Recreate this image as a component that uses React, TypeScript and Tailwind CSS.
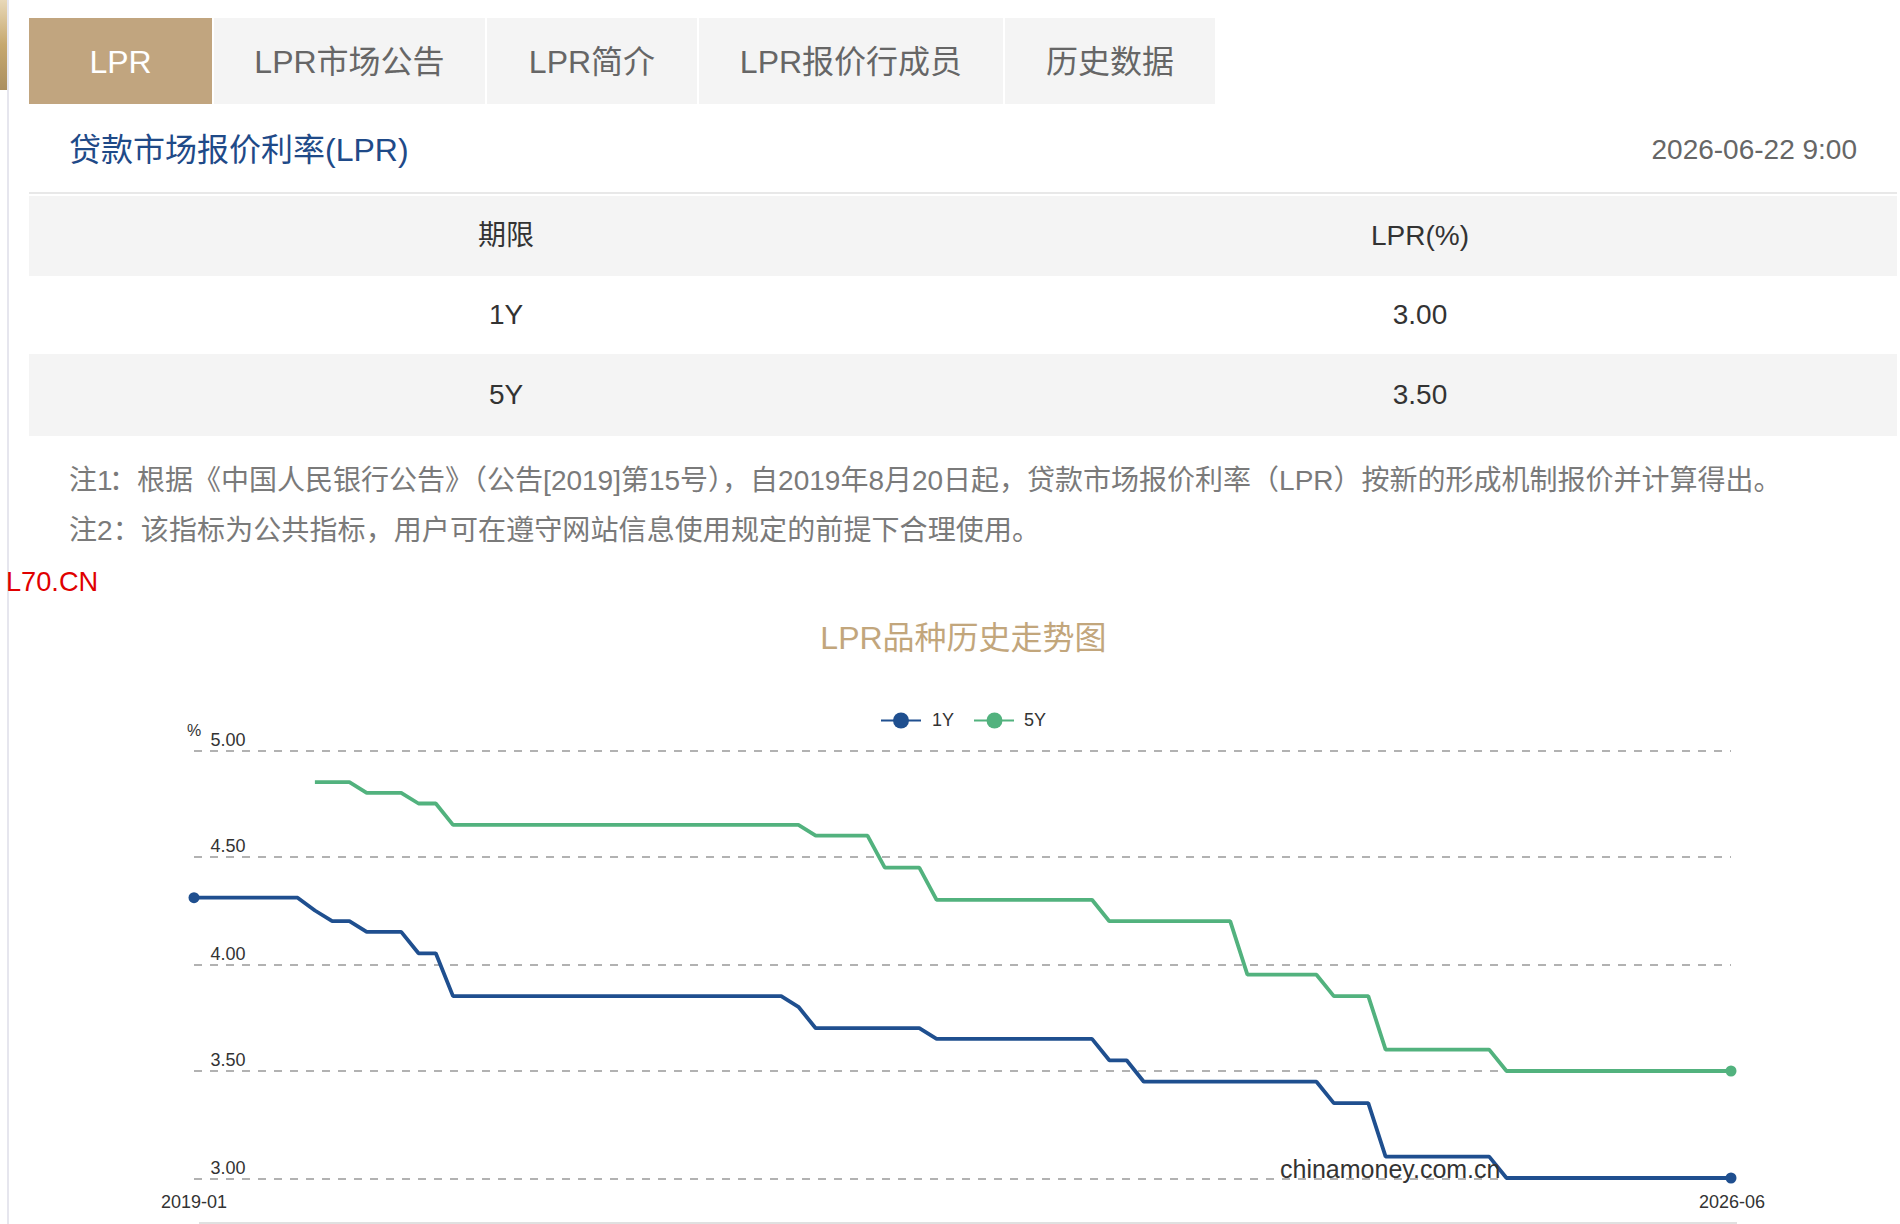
const tabs = [
  { label: 'LPR', width: 'w-[183px]', active: true },
  { label: 'LPR市场公告', width: 'w-[271px]', active: false },
  { label: 'LPR简介', width: 'w-[210px]', active: false },
  { label: 'LPR报价行成员', width: 'w-[304px]', active: false },
  { label: '历史数据', width: 'w-[210px]', active: false },
];

const rows = [
  { term: '期限', rate: 'LPR(%)', height: 'h-[80px]', shaded: true },
  { term: '1Y', rate: '3.00', height: 'h-[78px]', shaded: false },
  { term: '5Y', rate: '3.50', height: 'h-[82px]', shaded: true },
];

// [months held, rate], from 2019-01
const oneYear: [number, number][] = [
  [7, 4.31], [1, 4.25], [2, 4.2], [3, 4.15], [2, 4.05], [20, 3.85], [1, 3.8], [7, 3.7],
  [10, 3.65], [2, 3.55], [11, 3.45], [3, 3.35], [7, 3.1], [14, 3.0],
];
// 5Y series starts at 2019-08
const fiveYear: [number, number][] = [
  [3, 4.85], [3, 4.8], [2, 4.75], [21, 4.65], [4, 4.6], [3, 4.45], [10, 4.3], [8, 4.2],
  [5, 3.95], [3, 3.85], [7, 3.6], [14, 3.5],
];

const X0 = 194;
const STEP = (1731 - 194) / 89;
const toX = (i: number) => X0 + i * STEP;
const toY = (v: number) => 1178 - (v - 3) * 214;

function buildPoints(series: [number, number][], start: number) {
  const pts: string[] = [];
  let i = start;
  series.forEach(([months, rate]) => {
    for (let m = 0; m < months; m++) {
      pts.push(`${toX(i).toFixed(1)},${toY(rate).toFixed(1)}`);
      i++;
    }
  });
  return pts.join(' ');
}

function Chart() {
  const grid = [
    { y: 751, label: '5.00' },
    { y: 857, label: '4.50' },
    { y: 965, label: '4.00' },
    { y: 1071, label: '3.50' },
    { y: 1179, label: '3.00' },
  ];

  return (
    <svg viewBox="9 660 1891 564" className="block h-[564px] w-[1891px]">
      {grid.map((g) => (
        <g key={g.y}>
          <line x1={194} x2={1731} y1={g.y} y2={g.y} stroke="#999" strokeWidth={1.5} strokeDasharray="8 8" />
          <text x={210.5} y={g.y - 5} className="fill-[#333] text-[18px]">{g.label}</text>
        </g>
      ))}
      <text x={187} y={736} className="fill-[#333] text-[16px]">%</text>

      <line x1={881} x2={921} y1={720.5} y2={720.5} stroke="#1f4f8f" strokeWidth={2} />
      <circle cx={901} cy={720.5} r={8} fill="#1f4f8f" />
      <text x={932} y={726} className="fill-[#333] text-[18px]">1Y</text>
      <line x1={974} x2={1014} y1={720.5} y2={720.5} stroke="#52b27e" strokeWidth={2} />
      <circle cx={994.5} cy={720.5} r={8} fill="#52b27e" />
      <text x={1024} y={726} className="fill-[#333] text-[18px]">5Y</text>

      <polyline points={buildPoints(fiveYear, 7)} fill="none" stroke="#52b27e" strokeWidth={3.8} strokeLinejoin="bevel" />
      <polyline points={buildPoints(oneYear, 0)} fill="none" stroke="#1f4f8f" strokeWidth={3.8} strokeLinejoin="bevel" />
      <circle cx={194} cy={toY(4.31)} r={5.5} fill="#1f4f8f" />
      <circle cx={1731} cy={toY(3.0)} r={5.5} fill="#1f4f8f" />
      <circle cx={1731} cy={toY(3.5)} r={5.5} fill="#52b27e" />

      <text x={1280} y={1178} className="fill-[#333] text-[25px]">chinamoney.com.cn</text>
      <text x={194} y={1208} textAnchor="middle" className="fill-[#333] text-[18px]">2019-01</text>
      <text x={1732} y={1208} textAnchor="middle" className="fill-[#333] text-[18px]">2026-06</text>
      <rect x={199} y={1222} width={1538} height={2} fill="#e0e0e0" />
    </svg>
  );
}

export default function App() {
  return (
    <div className="flex h-[1224px] w-[1900px] overflow-hidden bg-white font-['Liberation_Sans','Noto_Sans_CJK_SC',sans-serif]">
      <aside className="flex w-[9px] shrink-0">
        <div className="h-[90px] w-[7px] bg-gradient-to-b from-[#e8d8b8] via-[#c6a86e] to-[#ab8f60]" />
        <div className="w-[2px] bg-[#e6e6ee]" />
      </aside>

      <main className="flex w-[1891px] flex-col">
        <nav className="ml-[20px] mt-[18px] flex gap-[2px]">
          {tabs.map((tab) => (
            <div
              key={tab.label}
              className={`flex h-[86px] items-center justify-center pt-[1px] text-[32px] ${tab.width} ${
                tab.active ? 'bg-[#c1a57f] text-white' : 'bg-[#f4f4f4] text-[#666]'
              }`}
            >
              {tab.label}
            </div>
          ))}
        </nav>

        <div className="ml-[20px] mr-[3px] flex h-[90px] items-center justify-between border-b-2 border-[#e8e8e8] pl-[40px] pr-[40px] pt-[3px]">
          <h2 className="text-[32px] text-[#1f4a88]">贷款市场报价利率(LPR)</h2>
          <span className="text-[28px] text-[#666]">2026-06-22 9:00</span>
        </div>

        <div className="ml-[20px] mr-[3px] mt-[2px] text-[28px] text-[#333]">
          {rows.map((row) => (
            <div
              key={row.term}
              className={`grid grid-cols-[954px_874px] items-center text-center ${row.height} ${
                row.shaded ? 'bg-[#f4f4f4]' : 'bg-white'
              }`}
            >
              <div>{row.term}</div>
              <div>{row.rate}</div>
            </div>
          ))}
        </div>

        <div className="ml-[60px] mt-[20px] text-[28px] leading-[50px] text-[#7a7a7a]">
          <p>注<span className="tracking-[-3.5px]">1</span>：根据《中国人民银行公告》（公告[2019]第15号），自2019年8月20日起，贷款市场报价利率（LPR）按新的形成机制报价并计算得出。</p>
          <p className="tracking-[0.1px]">注2：该指标为公共指标，用户可在遵守网站信息使用规定的前提下合理使用。</p>
        </div>

        <div className="-ml-[3px] mt-[10px] text-[27.2px] leading-[32px] text-[#e00000]">L70.CN</div>

        <h3 className="mb-[2px] mt-[20px] pl-[18px] text-center text-[32px] leading-[40px] text-[#c2a67c]">LPR品种历史走势图</h3>

        <Chart />
      </main>
    </div>
  );
}
